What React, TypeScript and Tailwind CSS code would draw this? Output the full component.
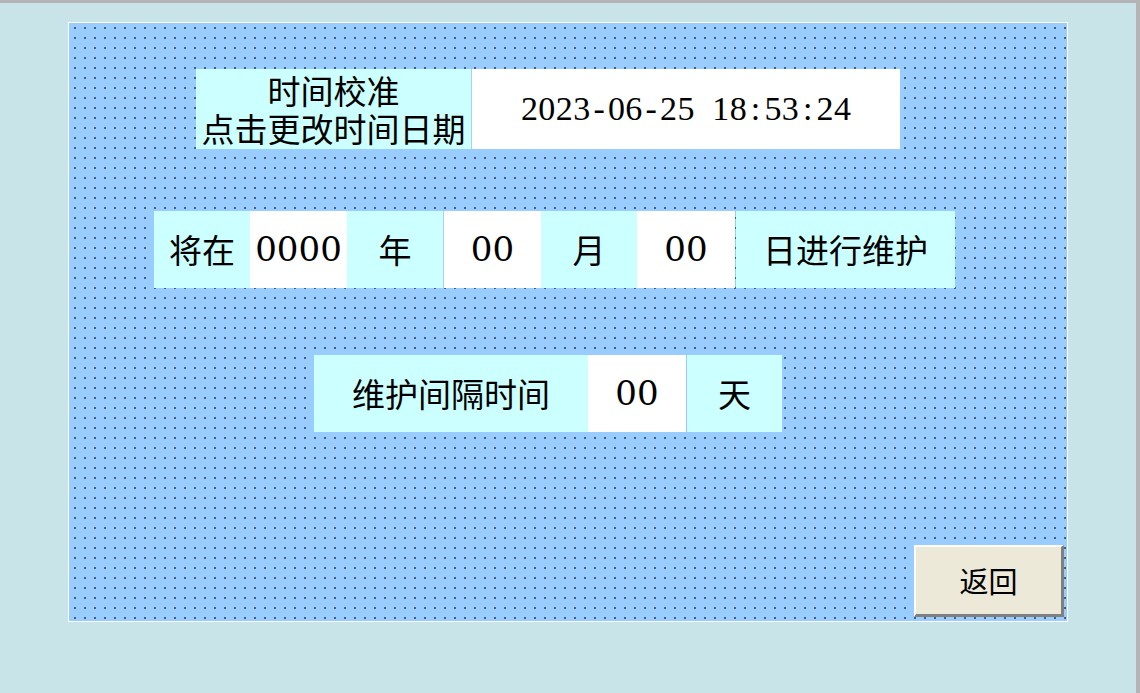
const cjk = "font-['Noto_Sans_CJK_SC',sans-serif]"
const num = "font-['DejaVu_Serif',serif] text-[34px] tracking-[0px]"

function Cell({ children, white = false, w, className = "" }: { children: React.ReactNode; white?: boolean; w: string; className?: string }) {
  return (
    <div className={`flex items-center justify-center text-black ${white ? "bg-white" : "bg-[#ccffff]"} ${w} ${className}`}>
      {children}
    </div>
  )
}

function DateText({ value }: { value: string }) {
  return (
    <div className="flex font-['Liberation_Serif',serif] text-[34px] leading-none text-black">
      {value.split("").map((c, i) => (
        <span key={i} className="inline-block w-[17.4px] text-center">
          {c}
        </span>
      ))}
    </div>
  )
}

export default function App() {
  return (
    <div className="w-[1140px] h-[693px] bg-[#c8e4e8] border-t-[3px] border-r-[4px] border-[#b4b4b4] overflow-hidden">
      <div
        className={`ml-[68px] mt-[19px] w-[1000px] h-[600px] border border-white bg-[#99ccff] bg-[radial-gradient(circle,#1a2030_0.6px,transparent_0.9px)] bg-[size:10px_10px] bg-[position:1px_0px] flex flex-col ${cjk}`}
      >
        {/* time calibration */}
        <div className="flex ml-[127px] mt-[46px] h-[80px]">
          <Cell w="w-[276px]" className="flex-col text-[33px] leading-[38px] border-r border-[#a8d0f8]">
            <span>时间校准</span>
            <span>点击更改时间日期</span>
          </Cell>
          <Cell white w="w-[428px]">
            <DateText value="2023-06-25 18:53:24" />
          </Cell>
        </div>

        {/* maintenance date */}
        <div className="flex ml-[85px] mt-[62px] h-[77px] text-[33px]">
          <Cell w="w-[96px]">将在</Cell>
          <Cell white w="w-[97px]">
            <span className={num}>0000</span>
          </Cell>
          <Cell w="w-[96px]">年</Cell>
          <Cell white w="w-[98px]" className="border-l border-[#a8d0f8]">
            <span className={num}>00</span>
          </Cell>
          <Cell w="w-[96px]">月</Cell>
          <Cell white w="w-[98px]">
            <span className={num}>00</span>
          </Cell>
          <Cell w="w-[219px]" className="ml-px">日进行维护</Cell>
        </div>

        {/* interval */}
        <div className="flex ml-[245px] mt-[67px] h-[77px] text-[33px]">
          <Cell w="w-[274px]">维护间隔时间</Cell>
          <Cell white w="w-[98px]">
            <span className={num}>00</span>
          </Cell>
          <Cell w="w-[95px]" className="ml-px">天</Cell>
        </div>

        <div className="flex justify-end mt-auto mr-[3px] mb-[4px]">
          <button className="w-[150px] h-[72px] bg-[#ece9d8] border-t-2 border-l-2 border-t-white border-l-white border-b-[3px] border-r-[3px] border-b-[#808080] border-r-[#808080] text-[29px] text-black">
            返回
          </button>
        </div>
      </div>
    </div>
  )
}
